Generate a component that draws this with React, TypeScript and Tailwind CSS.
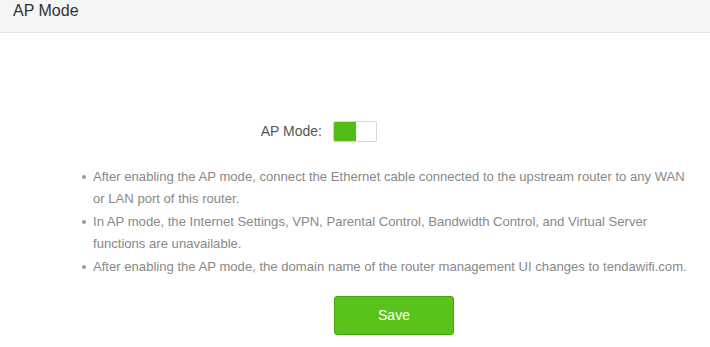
const notes = [
  'After enabling the AP mode, connect the Ethernet cable connected to the upstream router to any WAN or LAN port of this router.',
  'In AP mode, the Internet Settings, VPN, Parental Control, Bandwidth Control, and Virtual Server functions are unavailable.',
  'After enabling the AP mode, the domain name of the router management UI changes to tendawifi.com.',
]

export default function App() {
  return (
    <div className="h-[347px] w-[710px] overflow-hidden bg-white font-['Liberation_Sans',Arial,sans-serif]">
      <div className="flex h-[33px] items-center border-b border-[#e3e3e3] bg-[#f5f5f5] pl-[13px]">
        <h1 className="-mt-[10px] text-[16px] text-[#333]">AP Mode</h1>
      </div>

      <div className="mt-[88px] flex items-center">
        <span className="w-[322px] text-right text-[14px] text-[#555]">AP Mode:</span>
        <button className="ml-[11px] flex h-[21px] w-[44px] overflow-hidden rounded-[2px] border border-[#d6d6d6] bg-white">
          <span className="h-full w-[22px] bg-[#52bd14]" />
        </button>
      </div>

      <ul className="ml-[82px] mt-[24px] w-[609px] space-y-[1px] text-[13.1px] leading-[22px] text-[#888]">
        {notes.map((note) => (
          <li key={note} className="flex">
            <span className="mr-[7px] mt-[9px] h-[4px] w-[4px] shrink-0 rounded-full bg-[#999]" />
            <span>{note}</span>
          </li>
        ))}
      </ul>

      <div className="mt-[18px] pl-[334px]">
        <button className="h-[39px] w-[120px] rounded-[3px] border border-[#48a510] bg-[#58c31b] text-[14px] text-white">
          Save
        </button>
      </div>
    </div>
  )
}
